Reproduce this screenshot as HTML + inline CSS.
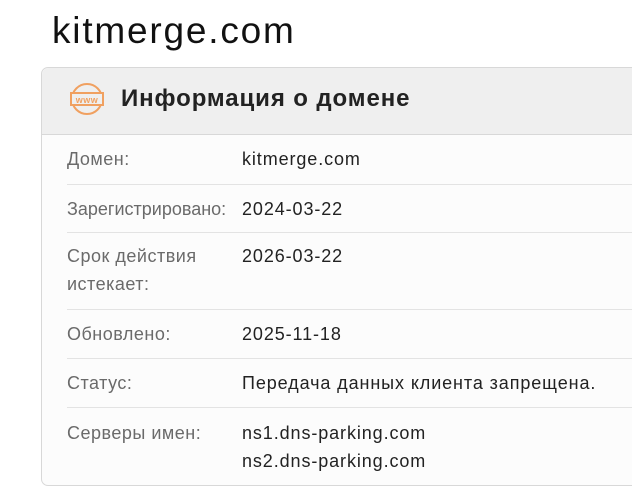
<!DOCTYPE html><html><head><meta charset="utf-8"><style>
body{margin:0;background:#fff;font-family:"Liberation Sans","DejaVu Sans",sans-serif;width:632px;height:501px;overflow:hidden;position:relative}
h1{position:absolute;left:52px;top:10px;margin:0;font-size:37px;font-weight:normal;color:#111;letter-spacing:1.8px}
.card{position:absolute;left:41px;top:67px;width:620px;height:417px;border:1px solid #d8d8d8;border-radius:7px;background:#fcfcfc}
.hd{height:66px;background:#efefef;border-bottom:1px solid #d8d8d8;border-radius:7px 7px 0 0;position:relative}
.hd span{position:absolute;left:79px;top:17px;font-size:24px;font-weight:bold;color:#222;letter-spacing:0.9px}
.hd svg{position:absolute;left:26px;top:13px}
.row{position:absolute;left:25px;width:600px;border-top:1px solid #e3e3e3;font-size:18px;line-height:28px;letter-spacing:0.9px}
.l{position:absolute;left:0;color:#6a6a6a;white-space:nowrap;letter-spacing:0.5px}
.v{position:absolute;left:175px;color:#222;white-space:nowrap}
</style></head><body>
<h1>kitmerge.com</h1>
<div class="card">
<div class="hd"><svg width="38" height="38" viewBox="0 0 38 38"><circle cx="19" cy="18" r="15" fill="none" stroke="#f0a060" stroke-width="2"/><rect x="3" y="12" width="32" height="12" fill="#efefef" stroke="#f0a060" stroke-width="2"/><text x="19" y="22" font-size="9" font-weight="bold" fill="#f0a060" text-anchor="middle" font-family="Liberation Sans" letter-spacing="0.5">www</text></svg><span>Информация о домене</span></div>
<div class="row" style="top:77px;border:none"><div class="l">Домен:</div><div class="v">kitmerge.com</div></div>
<div class="row" style="top:116px;padding-top:10px"><div class="l" style="top:10px;letter-spacing:0">Зарегистрировано:</div><div class="v" style="top:10px">2024-03-22</div></div>
<div class="row" style="top:164px"><div class="l" style="top:9px">Срок действия<br>истекает:</div><div class="v" style="top:9px">2026-03-22</div></div>
<div class="row" style="top:241px"><div class="l" style="top:10px">Обновлено:</div><div class="v" style="top:10px">2025-11-18</div></div>
<div class="row" style="top:290px"><div class="l" style="top:10px">Статус:</div><div class="v" style="top:10px">Передача данных клиента запрещена.</div></div>
<div class="row" style="top:339px"><div class="l" style="top:11px">Серверы имен:</div><div class="v" style="top:11px">ns1.dns-parking.com<br>ns2.dns-parking.com</div></div>
</div>
</body></html>
